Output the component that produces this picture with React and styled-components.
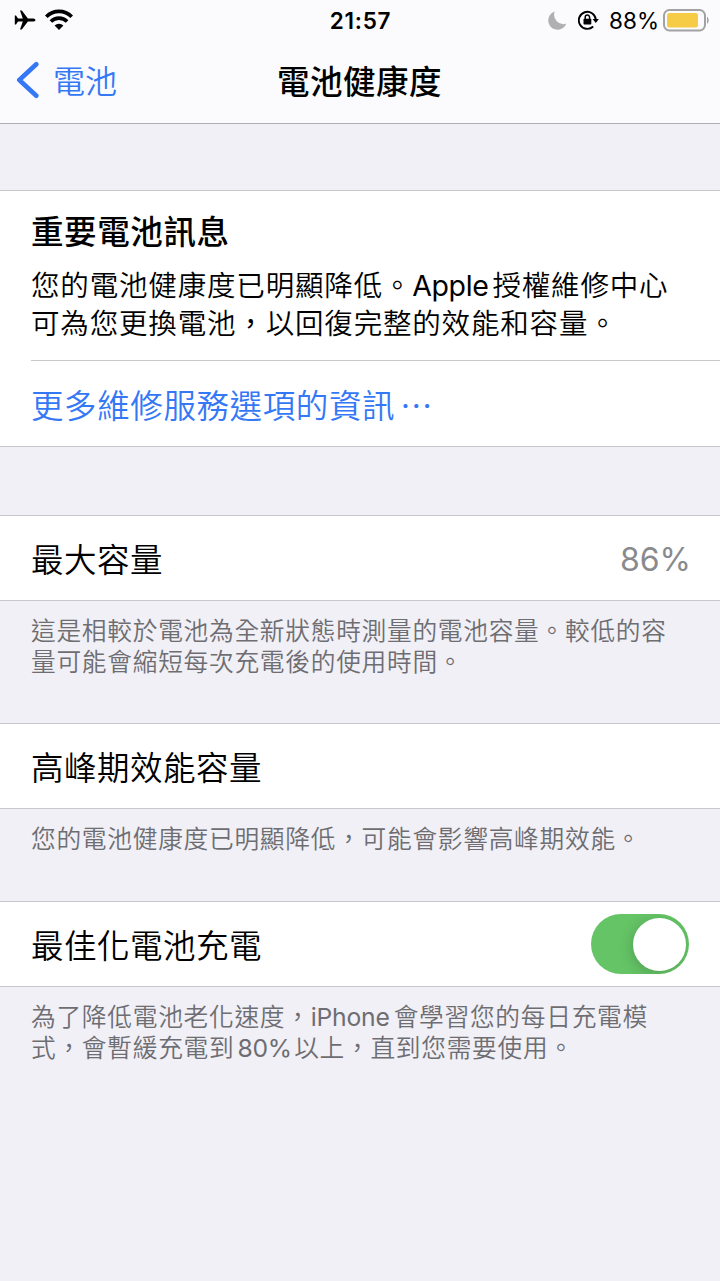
import { useState } from 'react';
import styled, { createGlobalStyle, css } from 'styled-components';

const GlobalStyle = createGlobalStyle`
  * {
    box-sizing: border-box;
  }

  body {
    margin: 0;
    background: #f1f0f6;
    color: #000;
    font-family: Inter, "Noto Sans CJK TC", sans-serif;
    font-weight: 350;
    -webkit-font-smoothing: antialiased;
  }
`;

const Screen = styled.div`
  width: 720px;
  min-height: 1281px;
  background: #f1f0f6;
  overflow: hidden;
`;

const Header = styled.header`
  height: 124px;
  background: #fbfbfd;
  border-bottom: 1px solid #b0b0b4;
`;

const StatusBar = styled.div`
  display: grid;
  grid-template-columns: 1fr auto 1fr;
  align-items: center;
  height: 38px;
  padding: 0 11px 0 14px;
`;

const StatusGroup = styled.div`
  display: flex;
  align-items: center;
  justify-content: ${props => (props.$end ? 'flex-end' : 'flex-start')};
`;

const Clock = styled.div`
  padding: 2px 2px 0 0;
  font-size: 22.5px;
  font-weight: 580;
  letter-spacing: 0.7px;
  line-height: 38px;
`;

const Percent = styled.span`
  margin: 0 4px 0 10px;
  font-size: 22.5px;
  font-weight: 400;
`;

const NavBar = styled.nav`
  display: grid;
  grid-template-columns: 1fr auto 1fr;
  align-items: center;
  height: 82px;
  padding: 0 17px 0 16px;
`;

const BackButton = styled.button`
  display: flex;
  align-items: center;
  gap: 14px;
  padding: 0;
  border: 0;
  background: none;
  color: #3478f6;
  font: inherit;
  font-size: 32px;
  cursor: pointer;

  svg {
    position: relative;
    top: 1px;
  }
`;

const Title = styled.h1`
  margin: 0;
  font-size: 32.5px;
  font-weight: 500;
  letter-spacing: 0.5px;
`;

const Card = styled.section`
  margin-top: ${props => props.$gap || 0}px;
  padding-left: 31px;
  background: #fff;
  border-top: 1px solid #c8c7cc;
  border-bottom: 1px solid #c8c7cc;
`;

const Notice = styled.div`
  height: 170px;
  padding-top: 19px;
  border-bottom: 1px solid #c8c7cc;
`;

const NoticeTitle = styled.h2`
  margin: 0 0 10.5px;
  font-size: 32.5px;
  font-weight: 500;
  line-height: 46px;
  letter-spacing: 0.6px;
`;

const lines = css`
  margin: 0;
  white-space: nowrap;

  span {
    display: block;
  }
`;

const NoticeText = styled.p`
  ${lines}
  font-size: 28.5px;
  line-height: 38.5px;
  letter-spacing: 0.83px;
`;

const Latin = styled.b`
  margin: 0 ${props => props.$after || 0}px 0 ${props => props.$before || 0}px;
  font-weight: 380;
  letter-spacing: ${props => props.$track || 0}px;
`;

const MoreLink = styled.a`
  display: flex;
  align-items: center;
  height: 85px;
  color: #3478f6;
  font-family: "Noto Sans CJK TC", sans-serif;
  font-size: 32.5px;
  letter-spacing: 0.6px;
`;

const Dots = styled.span`
  margin-left: 5px;
`;

const Row = styled.div`
  display: flex;
  align-items: center;
  justify-content: space-between;
  height: 84px;
  padding-right: 31px;
  font-size: 32.5px;
  letter-spacing: 0.5px;
`;

const RowLabel = styled.span`
  padding-bottom: 2px;
`;

const Value = styled.span`
  margin-right: -2px;
  padding-top: 2px;
  color: #8a8a8e;
  font-size: 32px;
  font-weight: 400;
  letter-spacing: 0;
`;

const Footnote = styled.p`
  ${lines}
  height: ${props => props.$height}px;
  padding: 15px 0 0 31px;
  color: #6d6d72;
  font-size: 24.7px;
  line-height: 31px;
  letter-spacing: 0.74px;
`;

const Switch = styled.button`
  display: flex;
  align-items: center;
  justify-content: ${props => (props.$on ? 'flex-end' : 'flex-start')};
  width: 98px;
  height: 60px;
  padding: 0 3px 0 4px;
  border: 0;
  border-radius: 30px;
  background: ${props => (props.$on ? '#65c466' : '#e9e9eb')};
  overflow: hidden;
  cursor: pointer;
`;

const Knob = styled.span`
  width: 53px;
  height: 53px;
  border-radius: 50%;
  background: #fff;
  box-shadow: -2px 3px 14px rgba(0, 0, 0, 0.17);
`;

const PlaneIcon = () => (
  <svg width="22" height="20" viewBox="0 0 22 20">
    <path
      d="M21.5 10c0-1-1.4-1.6-3-1.6h-4.6L8 .8C7.8.5 7.500.4 7.200.4H6l2.800 8H4L2 5.600H.8V14.400H2L4 11.600h4.800L6 19.600h1.200c.3 0 .6-.1.800-.4l5.900-7.600h4.600c1.600 0 3-.6 3-1.600z"
      fill="#000"
    />
  </svg>
);

const WifiIcon = () => (
  <svg width="30" height="22" viewBox="0 0 30 22" style={{ marginLeft: 8 }}>
    <g fill="none" stroke="#000" strokeWidth="3.7">
      <path d="M2.300 7.700a18 18 0 0 1 25.400 0" />
      <path d="M6.900 12.500a11.500 11.500 0 0 1 16.200 0" />
    </g>
    <path d="M10.600 16.600a6.200 6.200 0 0 1 8.800 0L15 21z" fill="#000" />
  </svg>
);

const MoonIcon = () => (
  <svg width="19" height="19" viewBox="0 0 19 19">
    <path
      d="M6.700.6A9.300 9.300 0 1 0 18.300 12.600 9.300 9.300 0 0 1 6.700.6z"
      fill="#b0b0b2"
    />
  </svg>
);

const RotationLockIcon = () => (
  <svg width="21" height="20" viewBox="0 0 21 20" style={{ marginLeft: 11 }}>
    <path
      d="M15.200 16.500a8.500 8.500 0 1 1 2.600-7"
      fill="none"
      stroke="#000"
      strokeWidth="1.900"
    />
    <path d="M14.600 9h6.200l-3 4z" fill="#000" />
    <rect x="5.500" y="8.700" width="7.800" height="5.800" rx="0.800" fill="#000" />
    <path
      d="M7.200 9V7.300a2.200 2.200 0 0 1 4.400 0V9"
      fill="none"
      stroke="#000"
      strokeWidth="1.500"
    />
  </svg>
);

const BatteryIcon = () => (
  <svg width="46" height="23" viewBox="0 0 46 23">
    <rect
      x="1"
      y="1"
      width="41"
      height="20.500"
      rx="5.500"
      fill="none"
      stroke="#a2a2a4"
      strokeWidth="2"
    />
    <rect x="4" y="4" width="31" height="14.500" rx="2.500" fill="#f6cb45" />
    <path d="M44 7.800c2.200 1 2.200 6 0 7z" fill="#a2a2a4" />
  </svg>
);

const BackIcon = () => (
  <svg width="23" height="38" viewBox="0 0 23 38">
    <path
      d="M20.300 3.200 3.300 19l17 15.800"
      fill="none"
      stroke="#3478f6"
      strokeWidth="4.600"
      strokeLinecap="round"
      strokeLinejoin="round"
    />
  </svg>
);

const App = () => {
  const [optimized, setOptimized] = useState(true);

  return (
    <>
      <GlobalStyle />
      <Screen lang="zh-Hant-TW">
        <Header>
          <StatusBar>
            <StatusGroup>
              <PlaneIcon />
              <WifiIcon />
            </StatusGroup>
            <Clock>21:57</Clock>
            <StatusGroup $end>
              <MoonIcon />
              <RotationLockIcon />
              <Percent>88%</Percent>
              <BatteryIcon />
            </StatusGroup>
          </StatusBar>
          <NavBar>
            <BackButton>
              <BackIcon />
              電池
            </BackButton>
            <Title>電池健康度</Title>
          </NavBar>
        </Header>

        <Card $gap={66}>
          <Notice>
            <NoticeTitle>重要電池訊息</NoticeTitle>
            <NoticeText>
              <span>
                您的電池健康度已明顯降低。
                <Latin $track={-0.4} $after={4}>Apple</Latin>
                授權維修中心
              </span>
              <span>可為您更換電池，以回復完整的效能和容量。</span>
            </NoticeText>
          </Notice>
          <MoreLink>
            更多維修服務選項的資訊<Dots>⋯</Dots>
          </MoreLink>
        </Card>

        <Card $gap={68}>
          <Row>
            <RowLabel>最大容量</RowLabel>
            <Value>86%</Value>
          </Row>
        </Card>
        <Footnote $height={122}>
          <span>這是相較於電池為全新狀態時測量的電池容量。較低的容</span>
          <span>量可能會縮短每次充電後的使用時間。</span>
        </Footnote>

        <Card>
          <Row>
            <RowLabel>高峰期效能容量</RowLabel>
          </Row>
        </Card>
        <Footnote $height={92}>
          <span>您的電池健康度已明顯降低，可能會影響高峰期效能。</span>
        </Footnote>

        <Card>
          <Row>
            <RowLabel>最佳化電池充電</RowLabel>
            <Switch
              $on={optimized}
              role="switch"
              aria-checked={optimized}
              onClick={() => setOptimized(!optimized)}
            >
              <Knob />
            </Switch>
          </Row>
        </Card>
        <Footnote $height={122}>
          <span>
            為了降低電池老化速度，
            <Latin $track={-0.2} $after={4}>iPhone</Latin>
            會學習您的每日充電模
          </span>
          <span>
            式，會暫緩充電到
            <Latin $before={3} $track={-0.3} $after={2.5}>80%</Latin>
            以上，直到您需要使用。
          </span>
        </Footnote>
      </Screen>
    </>
  );
};

export default App;
